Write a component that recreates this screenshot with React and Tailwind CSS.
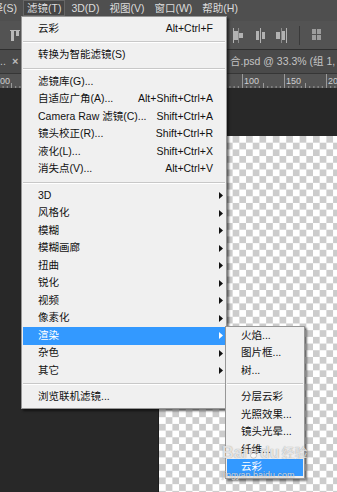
import React from "react";

const mainItems = [
  { label: "云彩", key: "Alt+Ctrl+F" },
  "sep",
  { label: "转换为智能滤镜(S)" },
  "sep",
  { label: "滤镜库(G)..." },
  { label: "自适应广角(A)...", key: "Alt+Shift+Ctrl+A" },
  { label: "Camera Raw 滤镜(C)...", key: "Shift+Ctrl+A" },
  { label: "镜头校正(R)...", key: "Shift+Ctrl+R" },
  { label: "液化(L)...", key: "Shift+Ctrl+X" },
  { label: "消失点(V)...", key: "Alt+Ctrl+V" },
  "sep",
  { label: "3D", sub: true },
  { label: "风格化", sub: true },
  { label: "模糊", sub: true },
  { label: "模糊画廊", sub: true },
  { label: "扭曲", sub: true },
  { label: "锐化", sub: true },
  { label: "视频", sub: true },
  { label: "像素化", sub: true },
  { label: "渲染", sub: true, active: true },
  { label: "杂色", sub: true },
  { label: "其它", sub: true },
  "sep",
  { label: "浏览联机滤镜..." },
];

const renderItems = [
  { label: "火焰..." },
  { label: "图片框..." },
  { label: "树..." },
  "sep",
  { label: "分层云彩" },
  { label: "光照效果..." },
  { label: "镜头光晕..." },
  { label: "纤维..." },
  { label: "云彩", active: true },
];

const Arrow = () => (
  <svg width="4" height="7" viewBox="0 0 4 7">
    <path d="M0 0L4 3.5L0 7Z" fill="currentColor" />
  </svg>
);

const Separator = () => (
  <div className="mx-[1px] flex h-[9px] flex-col justify-center">
    <div className="h-px bg-[#c8c8c8]" />
    <div className="h-px bg-white" />
  </div>
);

function MenuRow({ item, pl }) {
  return (
    <div
      className={`mx-[1px] flex h-[17.5px] items-center whitespace-nowrap ${pl} ${
        item.active ? "bg-[#3399ff] text-white" : "text-[#111]"
      } ${item.sub ? "pr-[2px]" : "pr-[12px]"}`}
    >
      <span className="flex-1">{item.label}</span>
      {item.key && <span>{item.key}</span>}
      {item.sub && <Arrow />}
    </div>
  );
}

// little toolbar glyphs
const AlignTop = () => (
  <svg width="10" height="11" viewBox="0 0 10 11" className="text-[#b9b9b9]">
    <rect x="0" y="0" width="10" height="1" fill="currentColor" />
    <rect x="1" y="1" width="3" height="10" fill="currentColor" />
    <rect x="6" y="1" width="3" height="5" fill="currentColor" />
  </svg>
);

const DistIcon = ({ mode }) => (
  <svg width="11" height="15" viewBox="0 0 11 15" className="text-[#b2b2b2]">
    {mode === 0 && (
      <>
        <rect x="0" y="0" width="1" height="15" fill="currentColor" />
        <rect x="1" y="3" width="4" height="9" fill="currentColor" />
        <rect x="5" y="0" width="1" height="15" fill="currentColor" opacity="0.6" />
        <rect x="6" y="5" width="4" height="5" fill="currentColor" />
      </>
    )}
    {mode === 1 && (
      <>
        <rect x="1" y="3" width="3" height="9" fill="currentColor" />
        <rect x="5" y="0" width="1" height="15" fill="currentColor" />
        <rect x="7" y="4" width="3" height="7" fill="currentColor" />
      </>
    )}
    {mode === 2 && (
      <>
        <rect x="0" y="4" width="4" height="7" fill="currentColor" />
        <rect x="5" y="0" width="1" height="15" fill="currentColor" opacity="0.6" />
        <rect x="6" y="3" width="3" height="9" fill="currentColor" />
        <rect x="10" y="0" width="1" height="15" fill="currentColor" />
      </>
    )}
  </svg>
);

const GridIcon = () => (
  <svg width="10" height="12" viewBox="0 0 10 12" className="text-[#9c9c9c]">
    <rect x="0" y="0" width="4" height="5" fill="currentColor" />
    <rect x="5" y="0" width="4" height="5" fill="currentColor" />
    <rect x="0" y="6" width="4" height="5" fill="currentColor" />
    <rect x="5" y="6" width="4" height="5" fill="currentColor" />
  </svg>
);

function Ruler() {
  const zero = 158;
  const step = 42;
  const ticks = [];
  for (let i = -50; i <= 45; i++) {
    const x = zero + (step / 10) * i;
    if (x < -2 || x > 340) continue;
    if (i % 10 === 0) continue;
    const h = i % 5 === 0 ? 5 : 2;
    ticks.push(<rect key={i} x={x} y={14 - h} width="1" height={h} fill="#9a9a9a" />);
  }
  const majors = [];
  for (let k = -4; k <= 4; k++) {
    const x = zero + step * k;
    majors.push(
      <g key={k}>
        <rect x={x} y="0" width="1" height="14" fill="#9a9a9a" />
        <text x={x + 2} y="10" fontSize="9" fill="#cfcfcf" fontFamily="Liberation Sans, sans-serif">
          {k * 50}
        </text>
      </g>
    );
  }
  return (
    <svg width="337" height="14" viewBox="0 0 337 14" className="block">
      {ticks}
      {majors}
    </svg>
  );
}

const Paw = () => (
  <svg width="11" height="12" viewBox="0 0 11 12" className="mx-[1px]">
    <g fill="rgba(255,255,255,0.75)" stroke="rgba(90,90,90,0.5)" strokeWidth="0.6">
      <ellipse cx="5.5" cy="8.6" rx="3" ry="2.6" />
      <circle cx="1.8" cy="5" r="1.3" />
      <circle cx="4.1" cy="2.2" r="1.3" />
      <circle cx="6.9" cy="2.2" r="1.3" />
      <circle cx="9.2" cy="5" r="1.3" />
    </g>
  </svg>
);

export default function App() {
  return (
    <div className="relative flex h-[492px] w-[337px] flex-col overflow-hidden bg-[#282828] font-['Liberation_Sans','Noto_Sans_CJK_SC',sans-serif] text-[10.5px]">
      {/* menu bar */}
      <div className="flex h-[21px] shrink-0 items-start gap-[2px] bg-[#4f4f4f] text-[#dcdcdc]">
        <div className="ml-[-22px] h-[16px] whitespace-nowrap px-[4px] leading-[16px]">选择(S)</div>
        <div className="h-[16px] whitespace-nowrap bg-[#454545] px-[4px] leading-[16px] shadow-[inset_0_0_0_1px_#666]">滤镜(T)</div>
        <div className="h-[16px] whitespace-nowrap px-[4px] leading-[16px]">3D(D)</div>
        <div className="h-[16px] whitespace-nowrap px-[4px] leading-[16px]">视图(V)</div>
        <div className="h-[16px] whitespace-nowrap px-[4px] leading-[16px]">窗口(W)</div>
        <div className="h-[16px] whitespace-nowrap px-[4px] leading-[16px]">帮助(H)</div>
      </div>

      {/* options bar */}
      <div className="flex h-[29px] shrink-0 items-center border-b border-[#2f2f2f] bg-[#535353]">
        <div className="ml-[10px]">
          <AlignTop />
        </div>
        <div className="ml-[213px] flex items-center">
          <DistIcon mode={0} />
          <div className="ml-[11px]">
            <DistIcon mode={1} />
          </div>
          <div className="ml-[10px]">
            <DistIcon mode={2} />
          </div>
          <div className="ml-[12px] h-[19px] w-px bg-[#3a3a3a]" />
          <div className="ml-[12px]">
            <GridIcon />
          </div>
        </div>
      </div>

      {/* document tabs */}
      <div className="flex h-[24px] shrink-0 items-center whitespace-nowrap border-b border-[#363636] bg-[#4a4a4a] text-[#c4c4c4]">
        <div className="flex w-[230px] shrink-0 items-center">
          <span className="w-[12px]">..</span>
          <span className="text-[11px] font-bold text-[#bcbcbc]">×</span>
        </div>
        <span>合.psd @ 33.3% (组 1, RGB/8) *</span>
      </div>

      {/* ruler */}
      <div className="h-[14px] shrink-0 bg-[#535353]">
        <Ruler />
      </div>

      {/* workspace */}
      <div className="flex-1 pl-[158px] pt-[48px]">
        <div className="h-full border-l border-[#1c1c1c] bg-[conic-gradient(#cccccc_25%,#ffffff_0_50%,#cccccc_0_75%,#ffffff_0)] bg-[length:13.4px_13.4px]" />
      </div>

      {/* filter menu */}
      <div className="absolute left-[21px] top-[16px] w-[206px] border border-[#979797] bg-[#f0f0f0] pb-[2px] pt-[3px] shadow-[2px_2px_2px_rgba(0,0,0,0.55)]">
        {mainItems.map((item, i) =>
          item === "sep" ? <Separator key={i} /> : <MenuRow key={i} item={item} pl="pl-[15px]" />
        )}
      </div>

      {/* render submenu */}
      <div className="absolute left-[225px] top-[326px] w-[80px] border border-[#979797] bg-[#f0f0f0] pb-[2px] shadow-[2px_2px_2px_rgba(0,0,0,0.5)]">
        {renderItems.map((item, i) =>
          item === "sep" ? <Separator key={i} /> : <MenuRow key={i} item={item} pl="pl-[14px]" />
        )}
      </div>

      {/* watermark */}
      <div className="absolute left-[222px] top-[444px] flex flex-col text-white/75 [text-shadow:0_0_1px_rgba(60,60,60,0.6)]">
        <div className="flex items-center whitespace-nowrap">
          <span className="text-[16px] font-bold leading-[18px]">Bai</span>
          <Paw />
          <span className="text-[16px] font-bold leading-[18px]">du</span>
          <span className="ml-[2px] text-[13px] leading-[18px]">经验</span>
        </div>
        <span className="mt-[8px] text-[9px] leading-[10px]">jingyan.baidu.com</span>
      </div>
    </div>
  );
}
